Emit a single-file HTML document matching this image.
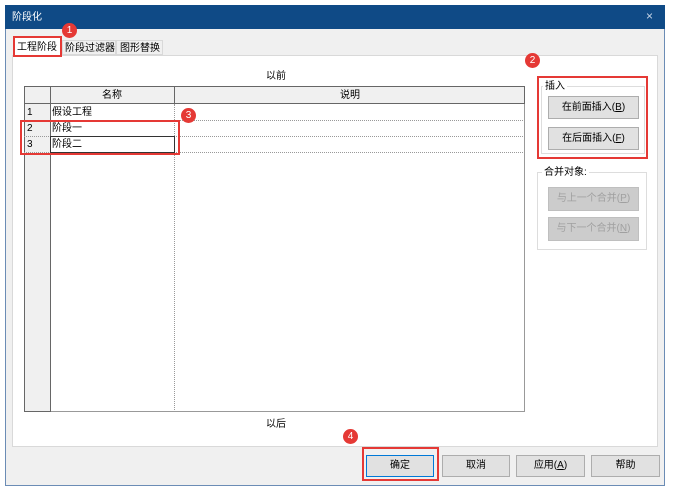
<!DOCTYPE html><html><head><meta charset="utf-8"><style>
*{margin:0;padding:0;box-sizing:border-box}
body{width:673px;height:491px;background:#fff;position:relative;overflow:hidden;font-family:"Liberation Sans","Noto Sans CJK SC",sans-serif;font-size:10px;line-height:12px;color:#000;white-space:nowrap}
.a{position:absolute}
.btn{position:absolute;background:#e1e1e1;border:1px solid #adadad;text-align:center;font-size:10px}
.dis{color:#a0a0a0;background:#cccccc;border-color:#bfbfbf}
.red{position:absolute;border:2px solid #e53935}
.c{position:absolute;width:15px;height:15px;border-radius:50%;background:#e53935;color:#fff;font-size:10px;text-align:center;line-height:15px}
.dl{position:absolute;border-top:1px dotted #999}
</style></head><body>
<div class="a" style="left:5px;top:5px;width:660px;height:481px;background:#f0f0f0;border:1px solid #6b8cb5"></div>
<div class="a" style="left:5px;top:5px;width:660px;height:24px;background:#0f4a86;color:#fff;font-size:10px;padding:7px 7px">阶段化</div>
<div class="a" style="left:646px;top:10px;color:#c8d6e8;font-size:12px">×</div>
<div class="a" style="left:12px;top:55px;width:646px;height:392px;background:#fff;border:1px solid #d9d9d9"></div>
<div class="a" style="left:14px;top:38px;width:47px;height:18px;background:#fff;font-size:10px;padding:4px 3px">工程阶段</div>
<div class="a" style="left:62px;top:40px;width:54px;height:15px;background:#f0f0f0;border:1px solid #d9d9d9;padding:2px 2px">阶段过滤器</div>
<div class="a" style="left:116px;top:40px;width:47px;height:15px;background:#f0f0f0;border:1px solid #d9d9d9;padding:2px 3px">图形替换</div>
<div class="a" style="left:266px;top:71px">以前</div>
<div class="a" style="left:266px;top:419px">以后</div>
<div class="a" style="left:24px;top:86px;width:501px;height:326px;border:1px solid #999;background:#fff"></div>
<div class="a" style="left:24px;top:86px;width:27px;height:326px;background:#f0f0f0;border:1.5px solid #666"></div>
<div class="a" style="left:24px;top:86px;width:501px;height:18px;background:#f0f0f0;border:1.5px solid #666"></div>
<div class="a" style="left:50px;top:86px;width:1px;height:18px;background:#666"></div>
<div class="a" style="left:174px;top:86px;width:1px;height:18px;background:#666"></div>
<div class="a" style="left:174px;top:104px;height:308px;border-left:1px dotted #999"></div>
<div class="a" style="left:102px;top:90px">名称</div>
<div class="a" style="left:340px;top:90px">说明</div>
<div class="dl" style="left:24px;top:120px;width:501px"></div>
<div class="dl" style="left:24px;top:136px;width:501px"></div>
<div class="dl" style="left:24px;top:152px;width:501px"></div>
<div class="a" style="left:27px;top:107px">1</div><div class="a" style="left:52px;top:107px">假设工程</div>
<div class="a" style="left:27px;top:123px">2</div><div class="a" style="left:52px;top:123px">阶段一</div>
<div class="a" style="left:27px;top:139px">3</div><div class="a" style="left:52px;top:139px">阶段二</div>
<div class="a" style="left:50px;top:136px;width:125px;height:17px;border:1px solid #333"></div>
<div class="a" style="left:541px;top:86px;width:104px;height:68px;border:1px solid #ddd"></div>
<div class="a" style="left:543px;top:81px;background:#fff;padding:0 2px">插入</div>
<div class="btn" style="left:548px;top:96px;width:91px;height:23px;line-height:21px">在前面插入(<u>B</u>)</div>
<div class="btn" style="left:548px;top:127px;width:91px;height:23px;line-height:21px">在后面插入(<u>F</u>)</div>
<div class="a" style="left:537px;top:172px;width:110px;height:78px;border:1px solid #ddd"></div>
<div class="a" style="left:542px;top:167px;background:#fff;padding:0 2px">合并对象:</div>
<div class="btn dis" style="left:548px;top:187px;width:91px;height:24px;line-height:22px">与上一个合并(<u>P</u>)</div>
<div class="btn dis" style="left:548px;top:217px;width:91px;height:24px;line-height:22px">与下一个合并(<u>N</u>)</div>
<div class="btn" style="left:366px;top:455px;width:68px;height:22px;line-height:19px;border:1.5px solid #0078d7">确定</div>
<div class="btn" style="left:442px;top:455px;width:68px;height:22px;line-height:20px">取消</div>
<div class="btn" style="left:516px;top:455px;width:69px;height:22px;line-height:20px">应用(<u>A</u>)</div>
<div class="btn" style="left:591px;top:455px;width:69px;height:22px;line-height:20px">帮助</div>
<div class="red" style="left:13px;top:36px;width:49px;height:21px"></div>
<div class="red" style="left:537px;top:76px;width:111px;height:83px"></div>
<div class="red" style="left:20px;top:120px;width:160px;height:35px"></div>
<div class="red" style="left:362px;top:447px;width:77px;height:34px"></div>
<div class="c" style="left:62px;top:23px">1</div>
<div class="c" style="left:525px;top:53px">2</div>
<div class="c" style="left:181px;top:108px">3</div>
<div class="c" style="left:343px;top:429px">4</div>
</body></html>
